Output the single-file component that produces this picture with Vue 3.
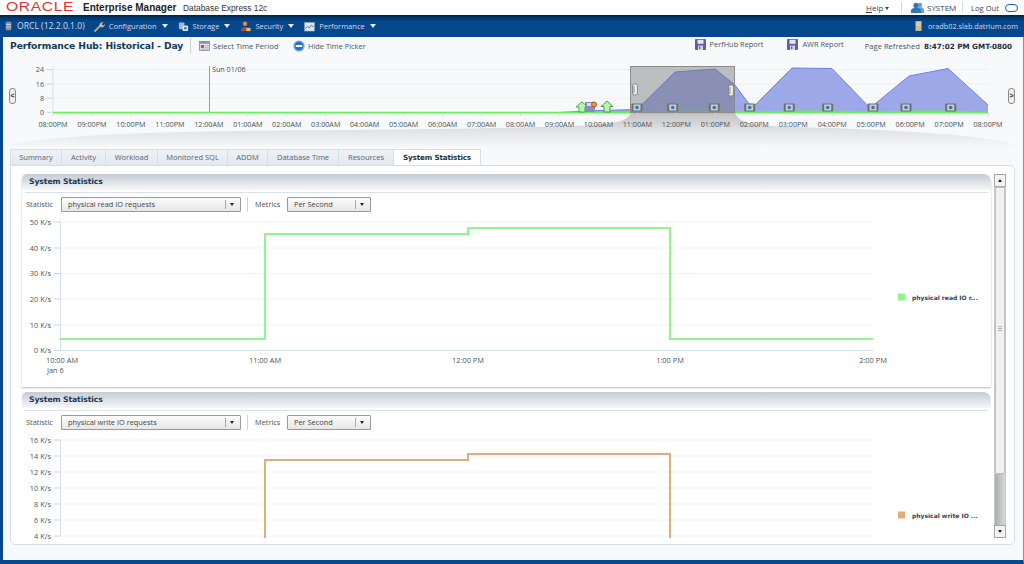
<script setup>
const navItems = [
  { label: 'Configuration', icon: 'wrench' },
  { label: 'Storage', icon: 'storage' },
  { label: 'Security', icon: 'security' },
  { label: 'Performance', icon: 'perf' }
]
const tabs = [
  { label: 'Summary', w: 52 },
  { label: 'Activity', w: 44 },
  { label: 'Workload', w: 52 },
  { label: 'Monitored SQL', w: 70 },
  { label: 'ADDM', w: 40 },
  { label: 'Database Time', w: 71 },
  { label: 'Resources', w: 55 },
  { label: 'System Statistics', w: 87, active: true }
]
const hours = ['08:00PM','09:00PM','10:00PM','11:00PM','12:00AM','01:00AM','02:00AM','03:00AM','04:00AM','05:00AM','06:00AM','07:00AM','08:00AM','09:00AM','10:00AM','11:00AM','12:00PM','01:00PM','02:00PM','03:00PM','04:00PM','05:00PM','06:00PM','07:00PM','08:00PM']
const hourX = hours.map((label, i) => ({ label, x: 53 + i * 38.96 }))
const yTicks = [{ t: '24', y: 69.7 }, { t: '16', y: 84 }, { t: '8', y: 98.2 }, { t: '0', y: 112.4 }]
const cameras = [637, 672.7, 714.3, 749.7, 789.3, 827.7, 873, 906, 950.7]
const blueArea = '559,112.5 598,110.5 637,109.5 675,72 715,69 735,85 749,104 755,105 792,68 832,68.5 870,108 909,76 948,68.5 988,105 988,112.5'
const greenArea = '637,112.5 675,110.5 715,110.5 749,111.5 755,111.5 792,110.5 832,110.5 870,111.5 909,110.5 948,110.5 988,112 988,112.5'

const xLabels = [
  { t: '10:00 AM', x: 62 },
  { t: '11:00 AM', x: 265 },
  { t: '12:00 PM', x: 468 },
  { t: '1:00 PM', x: 670 },
  { t: '2:00 PM', x: 873 }
]
const panels = [
  {
    statistic: 'physical read IO requests',
    legend: 'physical read IO r...',
    color: '#8ff58e',
    top: 216, height: 171,
    ticks: [['50 K/s', 222], ['40 K/s', 248], ['30 K/s', 273.5], ['20 K/s', 299], ['10 K/s', 325], ['0 K/s', 350.5]],
    line: '60,339 265,339 265,234 468,234 468,228 670,228 670,339 873,339',
    legendY: 297,
    showX: true
  },
  {
    statistic: 'physical write IO requests',
    legend: 'physical write IO ...',
    color: '#e0ae78',
    top: 434, height: 108,
    ticks: [['16 K/s', 440], ['14 K/s', 456], ['12 K/s', 472], ['10 K/s', 488], ['8 K/s', 504], ['6 K/s', 520], ['4 K/s', 536]],
    line: '265,538 265,460 468,460 468,454 670,454 670,538',
    legendY: 515,
    showX: false
  }
]
</script>

<template>
  <div class="app">
    <header class="brand">
      <div class="brand-left">
        <span class="oracle">ORACLE</span>
        <span class="em">Enterprise Manager</span>
        <span class="dbx">Database Express 12c</span>
      </div>
      <div class="brand-right">
        <span class="help"><u>H</u>elp <i class="mini-caret"></i></span>
        <span class="sep"></span>
        <svg class="user" viewBox="0 0 13 11" width="13" height="11">
          <circle cx="9" cy="3" r="2.2" fill="#6f9fc9" />
          <path d="M5 11V8c0-2 2-3 4-3s4 1 4 3v3z" fill="#6f9fc9" />
          <circle cx="5" cy="3.4" r="2.6" fill="#2f78b8" />
          <path d="M0 11V8.5C0 6.6 2.4 5.8 5 5.8s5 .8 5 2.7V11z" fill="#2f78b8" />
        </svg>
        <span class="system">SYSTEM</span>
        <span class="sep"></span>
        <span class="logout">Log Out</span>
        <i class="ring"></i>
      </div>
    </header>

    <nav class="nav">
      <div class="nav-item first">
        <svg viewBox="0 0 7 10" width="7" height="10">
          <rect x="0.5" y="0.5" width="6" height="9" rx="1.5" fill="#8b93a5" stroke="#3c4660" stroke-width=".6" />
          <path d="M1 3.5h5M1 6h5" stroke="#dfe3ea" stroke-width=".7" />
        </svg>
        <span>ORCL (12.2.0.1.0)</span>
      </div>
      <div v-for="item in navItems" :key="item.label" class="nav-item">
        <svg viewBox="0 0 12 12" width="11" height="11">
          <g v-if="item.icon === 'wrench'">
            <path d="M1 11l6-6" stroke="#b9a888" stroke-width="2" stroke-linecap="round" />
            <path d="M6 5.5C5.5 3 7.5 1 10.5 1.2L8.5 3.4l.8 1.2 1.4.3 1-2c.7 2.6-1.8 4.8-4.2 3.8z" fill="#c7bda8" />
          </g>
          <g v-else-if="item.icon === 'storage'">
            <rect x="1" y="1.5" width="6" height="7.5" rx="1" fill="#9fb9d3" />
            <rect x="5" y="5" width="6" height="6" rx="1" fill="#d9e2ea" />
            <circle cx="8" cy="8" r="1.4" fill="#2b76b9" />
          </g>
          <g v-else-if="item.icon === 'security'">
            <circle cx="5.5" cy="3" r="2.4" fill="#e08a4a" />
            <path d="M1 11c0-3 2-4.5 4.5-4.5S10 8 10 11z" fill="#b5482a" />
            <rect x="7" y="7.5" width="4.5" height="3.5" fill="#e6c060" />
          </g>
          <g v-else>
            <rect x="0.5" y="1.5" width="11" height="9.5" fill="#dfe5ec" stroke="#8795a8" stroke-width=".6" />
            <path d="M1.5 8l2.5-2 2 1.5 2-3 2.5 2" fill="none" stroke="#43739f" stroke-width="1" />
          </g>
        </svg>
        <span>{{ item.label }}</span>
        <i class="caret"></i>
      </div>
      <div class="host">
        <svg viewBox="0 0 7 10" width="7" height="10">
          <rect x="0.5" y="0" width="6" height="10" fill="#cdbf8f" stroke="#8f8460" stroke-width=".5" />
          <path d="M1.5 2h4M1.5 4h4" stroke="#f3ecd2" stroke-width=".7" />
        </svg>
        <span>oradb02.slab.datrium.com</span>
      </div>
    </nav>

    <main class="main">
      <div class="titlebar">
        <h1 class="title">Performance Hub: Historical - Day</h1>
        <span class="vline"></span>
        <div class="tool first-tool">
          <svg viewBox="0 0 12 11" width="11" height="10">
            <rect x="0.5" y="0.5" width="11" height="10" fill="#e8e8ee" stroke="#7d7f95" stroke-width=".8" />
            <rect x="0.5" y="0.5" width="11" height="2.5" fill="#8d8fa6" />
            <rect x="2" y="4.5" width="3.5" height="3" fill="#c9393a" />
            <path d="M6.5 5h4M6.5 7h4M2 9h8.5" stroke="#9a9cb0" stroke-width=".8" />
          </svg>
          <span>Select Time Period</span>
        </div>
        <div class="tool hide-tool">
          <svg viewBox="0 0 12 12" width="12" height="12">
            <circle cx="6" cy="6" r="5.6" fill="#6ea6e2" />
            <circle cx="6" cy="6" r="4.2" fill="#2d6fc0" />
            <rect x="2.8" y="5" width="6.4" height="2" fill="#fff" />
          </svg>
          <span>Hide Time Picker</span>
        </div>
        <div class="title-right">
          <div v-for="r in ['PerfHub Report', 'AWR Report']" :key="r" class="tool report">
            <svg viewBox="0 0 11 11" width="11" height="11">
              <rect width="11" height="11" rx="1" fill="#5f5fa8" />
              <rect x="2.5" y="0.8" width="6" height="4" fill="#e6e6f4" />
              <rect x="3" y="6.6" width="5" height="4.4" fill="#d8d8ea" />
              <rect x="4" y="7.4" width="1.4" height="2.8" fill="#5f5fa8" />
            </svg>
            <span>{{ r }}</span>
          </div>
          <div class="refreshed">Page Refreshed <b>8:47:02 PM GMT-0800</b></div>
        </div>
      </div>

      <div class="picker">
        <svg class="picker-svg" viewBox="3 60 1018 89" width="1018" height="89">
          <defs>
            <linearGradient id="shade" x1="0" y1="0" x2="0" y2="1">
              <stop offset="0" stop-color="#bcbec0" />
              <stop offset="0.55" stop-color="#e2e4e6" />
              <stop offset="1" stop-color="#f7f9fb" />
            </linearGradient>
          </defs>
          <path d="M10 145C60 133 200 131 350 130C450 129 540 128 590 125C610 124 630 122 631 111H735C736 120 745 124 770 126C880 130 970 132 1017 145V148H10z" fill="url(#shade)" />
          <g stroke="#edf0f3" stroke-width="1">
            <line x1="53" x2="988" y1="69.5" y2="69.5" />
            <line x1="53" x2="988" y1="84" y2="84" />
            <line x1="53" x2="988" y1="98" y2="98" />
          </g>
          <line x1="53" x2="53" y1="66" y2="113" stroke="#d6dfea" />
          <g v-for="t in yTicks" :key="t.t">
            <text class="tick-y" x="44" :y="t.y + 2.5" text-anchor="end">{{ t.t }}</text>
            <line x1="47" x2="52" :y1="t.y" :y2="t.y" stroke="#c7d3e0" />
          </g>
          <line x1="209.5" x2="209.5" y1="66" y2="112" stroke="#9a9a9a" />
          <text class="tick-y" x="212" y="71.5">Sun 01/06</text>
          <polygon :points="blueArea" fill="#9da8e8" />
          <polyline points="559,112.5 598,110.5 637,109.5 675,72 715,69 735,85 749,104 755,105 792,68 832,68.5 870,108 909,76 948,68.5 988,105" fill="none" stroke="#6f83ee" stroke-width="1" />
          <polygon :points="greenArea" fill="#70e070" />
          <line x1="53" x2="988" y1="112.6" y2="112.6" stroke="#66f05a" stroke-width="1.6" />
          <g v-for="h in hourX" :key="h.label + h.x">
            <line :x1="h.x" :x2="h.x" y1="113" y2="116" stroke="#d0d8e2" />
            <text class="tick-x" :x="h.x" y="126.5" text-anchor="middle">{{ h.label }}</text>
          </g>
          <rect x="630.5" y="66.5" width="104" height="46" fill="#6d6d6d" fill-opacity=".42" stroke="#8b8b8b" />
          <g fill="#ececec" stroke="#777" stroke-width=".8">
            <rect x="632.5" y="84" width="5" height="11" rx="2" />
            <rect x="728.5" y="85" width="5" height="11" rx="2" />
          </g>
          <path d="M634 86v7M730 87v7" stroke="#888" stroke-width="1" />
          <g v-for="c in cameras" :key="c">
            <rect :x="c - 5.5" y="103.5" width="11" height="8" rx="1" fill="#6e7072" />
            <rect :x="c - 3.5" y="104.5" width="7" height="6" fill="#c9cdd1" />
            <circle :cx="c" cy="107.5" r="1.8" fill="#2d78c4" />
          </g>
          <path d="M582 102l6 5h-3v5h-6v-5h-3z" fill="#bff0b8" stroke="#37a83a" stroke-width=".9" />
          <rect x="585" y="102" width="10" height="10" rx="1" fill="#8a8bc0" />
          <rect x="587" y="103" width="6" height="3" fill="#dcdcef" />
          <circle cx="594" cy="104.5" r="2.6" fill="#e2a020" stroke="#c0392b" stroke-width=".8" />
          <path d="M607 101l6 5.5h-3v5.5h-6v-5.5h-3z" fill="#bff0b8" stroke="#37a83a" stroke-width="1" />
        </svg>
        <button class="page-btn left">&lt;</button>
        <button class="page-btn right">&gt;</button>
      </div>

      <div class="tabs">
        <div
          v-for="t in tabs"
          :key="t.label"
          class="tab"
          :class="{ active: t.active }"
          :style="{ width: t.w + 'px' }"
        >{{ t.label }}</div>
      </div>

      <section class="tab-body">
        <div class="panels">
          <article v-for="(p, i) in panels" :key="p.statistic" class="panel" :class="{ second: i === 1 }">
            <h2 class="panel-head">System Statistics</h2>
            <div class="controls">
              <label class="lbl-stat">Statistic</label>
              <div class="select wide"><span>{{ p.statistic }}</span><i class="sel-arrow"></i></div>
              <span class="ctl-sep"></span>
              <label class="lbl-met">Metrics</label>
              <div class="select narrow"><span>Per Second</span><i class="sel-arrow"></i></div>
            </div>
            <svg
              class="chart"
              :viewBox="`22 ${p.top} 969 ${p.height}`"
              width="969"
              :height="p.height"
            >
              <g v-for="t in p.ticks" :key="t[0]">
                <line x1="60" x2="873" :y1="t[1]" :y2="t[1]" stroke="#eef1f5" />
                <line x1="54" x2="60" :y1="t[1]" :y2="t[1]" stroke="#c5d4e6" />
                <text class="axis" x="51" :y="t[1] + 2.5" text-anchor="end">{{ t[0] }}</text>
              </g>
              <line x1="60.5" x2="60.5" :y1="p.ticks[0][1]" :y2="p.ticks[p.ticks.length - 1][1]" stroke="#d5e0ee" />
              <polyline :points="p.line" fill="none" :stroke="p.color" stroke-width="2" />
              <rect x="898" :y="p.legendY - 3.5" width="7" height="7" :fill="p.color" />
              <text class="legend" x="912" :y="p.legendY + 2.5">{{ p.legend }}</text>
              <template v-if="p.showX">
                <line x1="60" x2="873" y1="350.5" y2="350.5" stroke="#d5e0ee" />
                <text v-for="l in xLabels" :key="l.t" class="axis" :x="l.x" y="362.5" text-anchor="middle">{{ l.t }}</text>
                <text class="axis" x="47" y="372.5">Jan 6</text>
              </template>
            </svg>
          </article>
        </div>
        <div class="scrollbar">
          <div class="sb-btn"><i class="up"></i></div>
          <div class="sb-thumb"><i class="grip"></i></div>
          <div class="sb-track"></div>
          <div class="sb-btn"><i class="down"></i></div>
        </div>
      </section>
    </main>
  </div>
</template>

<style>
html, body { margin: 0; background: #fff; }
</style>

<style scoped>
.app {
  width: 1024px;
  height: 564px;
  overflow: hidden;
  display: flex;
  flex-direction: column;
  font-family: "Open Sans", "Liberation Sans", sans-serif;
  font-size: 7.6px;
  color: #4a5560;
}
.brand {
  height: 15px;
  flex: none;
  display: flex;
  justify-content: space-between;
  align-items: center;
  background: #fff;
}
.brand-left { display: flex; align-items: center; }
.oracle {
  display: inline-block;
  margin-left: 6px;
  width: 77px;
  font: 12.5px/13px "Liberation Sans", sans-serif;
  letter-spacing: .5px;
  transform: scaleX(1.25);
  transform-origin: left center;
  color: #e0342a;
}
.em { font: 700 10px "Liberation Sans", sans-serif; color: #222; width: 100px; }
.dbx { font: 8.4px "Liberation Sans", sans-serif; color: #333; }
.brand-right { display: flex; align-items: center; padding-right: 6px; font-size: 8px; color: #3a4450; }
.help { width: 24px; margin-right: 11px; }
.mini-caret {
  display: inline-block;
  border: 2.5px solid transparent;
  border-top: 3px solid #3a4450;
  border-bottom: 0;
  vertical-align: middle;
}
.sep { width: 1px; height: 11px; background: #d3dde8; }
.user { margin: 0 3px 0 9px; }
.system { width: 35px; }
.logout { margin-left: 8px; width: 34px; font-size: 7.6px; }
.ring {
  width: 11px;
  height: 6px;
  border: 1.7px solid #1c5fa8;
  border-radius: 5px;
}
.nav {
  height: 22px;
  flex: none;
  display: flex;
  align-items: center;
  padding: 0 6px 0 5px;
  color: #cfdcec;
  font-size: 7.5px;
  background: linear-gradient(#02213f 0, #03396f 3px, #05478c 7px, #05488e 100%);
}
.nav-item { display: flex; align-items: center; gap: 4px; margin-right: 10px; }
.nav-item .caret { margin-left: 1px; }
.nav-item.first { gap: 5px; margin-right: 9px; font-size: 8.6px; }
.caret {
  border: 3px solid transparent;
  border-top: 4px solid #e4ecf5;
  border-bottom: 0;
}
.host { margin-left: auto; display: flex; align-items: center; gap: 6px; font-size: 7.3px; }
.main {
  flex: 1;
  min-height: 0;
  display: flex;
  flex-direction: column;
  background: #f7f9fb;
  border-left: 3px solid #05488e;
  border-right: 1px solid #6f9ac4;
  border-bottom: 4px solid #05488e;
}
.titlebar { height: 23px; flex: none; display: flex; align-items: flex-start; padding-left: 7px; }
.title {
  margin: 2px 0 0;
  width: 180px;
  font: 700 9.2px/13px "DejaVu Sans", sans-serif;
  letter-spacing: -.1px;
  color: #123a58;
  white-space: nowrap;
}
.vline { width: 1px; height: 16px; margin-top: 1px; background: #ccd5df; }
.tool { display: flex; align-items: center; gap: 3px; height: 16px; margin-top: 1px; }
.first-tool { margin-left: 8px; width: 94px; }
.hide-tool { font-size: 7.4px; }
.title-right { margin-left: auto; display: flex; align-items: flex-start; padding-right: 11px; }
.report { margin-right: 24px; margin-top: -1px; gap: 4px; font-size: 7.4px; }
.report:nth-child(2) { margin-right: 21px; }
.refreshed { margin-top: 4px; line-height: 10px; }
.refreshed b { margin-left: 2px; font: 700 7.2px "DejaVu Sans", sans-serif; color: #1f2d3a; }
.picker { position: relative; height: 89px; flex: none; }
.picker-svg { display: block; }
.tick-y, .tick-x { font-size: 7.2px; fill: #48525c; font-family: "Open Sans", sans-serif; }
.page-btn {
  position: absolute;
  top: 28px;
  box-sizing: border-box;
  width: 7px;
  height: 16px;
  padding: 0;
  border: 1px solid #8a8a8a;
  border-radius: 3px;
  background: #eee;
  font: 700 7px/14px "Liberation Sans", sans-serif;
  color: #222;
  overflow: visible;
}
.page-btn.left { left: 6px; }
.page-btn.right { left: 1005px; }
.tabs { display: flex; height: 17px; flex: none; padding-left: 7px; }
.tab {
  box-sizing: border-box;
  text-align: center;
  line-height: 15px;
  font-size: 7.5px;
  color: #59646f;
  background: linear-gradient(#eef2f6, #e3e9ef);
  border: 1px solid #d6dee6;
  border-left: 0;
  white-space: nowrap;
}
.tab:first-child { border-left: 1px solid #d6dee6; }
.tab.active {
  background: #fff;
  border-bottom-color: #fff;
  font: 700 7.2px/16px "DejaVu Sans", sans-serif;
  letter-spacing: -.15px;
  color: #26323c;
}
.tab-body {
  box-sizing: border-box;
  flex: none;
  height: 380px;
  margin: -1px 8px 0 7px;
  padding: 8px 5px 6px 11px;
  display: flex;
  gap: 4px;
  background: #fff;
  border: 1px solid #d6dee9;
  border-radius: 0 5px 5px 5px;
}
.panels { width: 969px; height: 364px; flex: none; }
.panel { border-radius: 5px 8px 0 0; box-shadow: 0 1px 2px #bcbcbc; overflow: hidden; height: 213px; margin-bottom: 5px; }
.panel.second { height: 149px; margin: 0; box-shadow: none; }
.panel-head {
  margin: 0;
  height: 16px;
  padding-left: 7px;
  font: 700 7.7px/16px "DejaVu Sans", sans-serif;
  letter-spacing: -.1px;
  color: #123a58;
  background: linear-gradient(#c6cbd2, #f6f7f9);
  border-bottom: 2px solid #fff;
}
.controls {
  display: flex;
  align-items: center;
  height: 22px;
  margin: 0 3px 1px;
  padding-left: 1px;
  border-top: 1px solid #d9e1ea;
  font-size: 7.4px;
}
.lbl-stat { width: 27px; }
.lbl-met { width: 24px; }
.select {
  box-sizing: border-box;
  height: 15px;
  display: flex;
  align-items: center;
  justify-content: space-between;
  padding-left: 6px;
  border: 1px solid #9a9a9a;
  border-radius: 1px;
  background: linear-gradient(#fbfbfb, #e7e7e7);
  color: #444;
}
.wide { width: 180px; margin-left: 8px; }
.narrow { width: 84px; margin-left: 8px; }
.sel-arrow { position: relative; width: 14px; height: 9px; border-left: 1px solid #aaa; }
.sel-arrow::after {
  content: "";
  position: absolute;
  left: 4px;
  top: 3px;
  border: 2.5px solid transparent;
  border-top: 3.5px solid #222;
  border-bottom: 0;
}
.ctl-sep { width: 1px; height: 15px; margin: 0 7px 0 6px; background: #ccd5df; }
.chart { display: block; }
.axis { font-size: 7.4px; fill: #4a5560; font-family: "Open Sans", sans-serif; }
.legend { font: 700 6px "DejaVu Sans", sans-serif; fill: #32414f; }
.scrollbar { width: 12px; flex: none; display: flex; flex-direction: column; background: #e6e6e6; border: 1px solid #c9c9c9; box-sizing: border-box; height: 364px; margin-left: -1px; }
.sb-btn { height: 11px; flex: none; display: flex; align-items: center; justify-content: center; background: #f2f2f2; border: 1px solid #aaa; margin: -1px; }
.up { border: 2.5px solid transparent; border-bottom: 3px solid #222; border-top: 0; }
.down { border: 2.5px solid transparent; border-top: 3px solid #222; border-bottom: 0; }
.sb-thumb {
  box-sizing: border-box;
  height: 287px;
  flex: none;
  margin-top: 1px;
  padding-bottom: 4px;
  display: flex;
  align-items: center;
  justify-content: center;
  background: #f1f1f1;
  border: 1px solid #bfbfbf;
  border-radius: 0 0 2px 2px;
}
.grip { width: 4px; height: 6px; background: repeating-linear-gradient(#b5b5b5 0 1px, #eee 1px 2px); }
.sb-track { flex: 1; background: linear-gradient(90deg, #a9aeae, #d7d9d9); }
</style>
